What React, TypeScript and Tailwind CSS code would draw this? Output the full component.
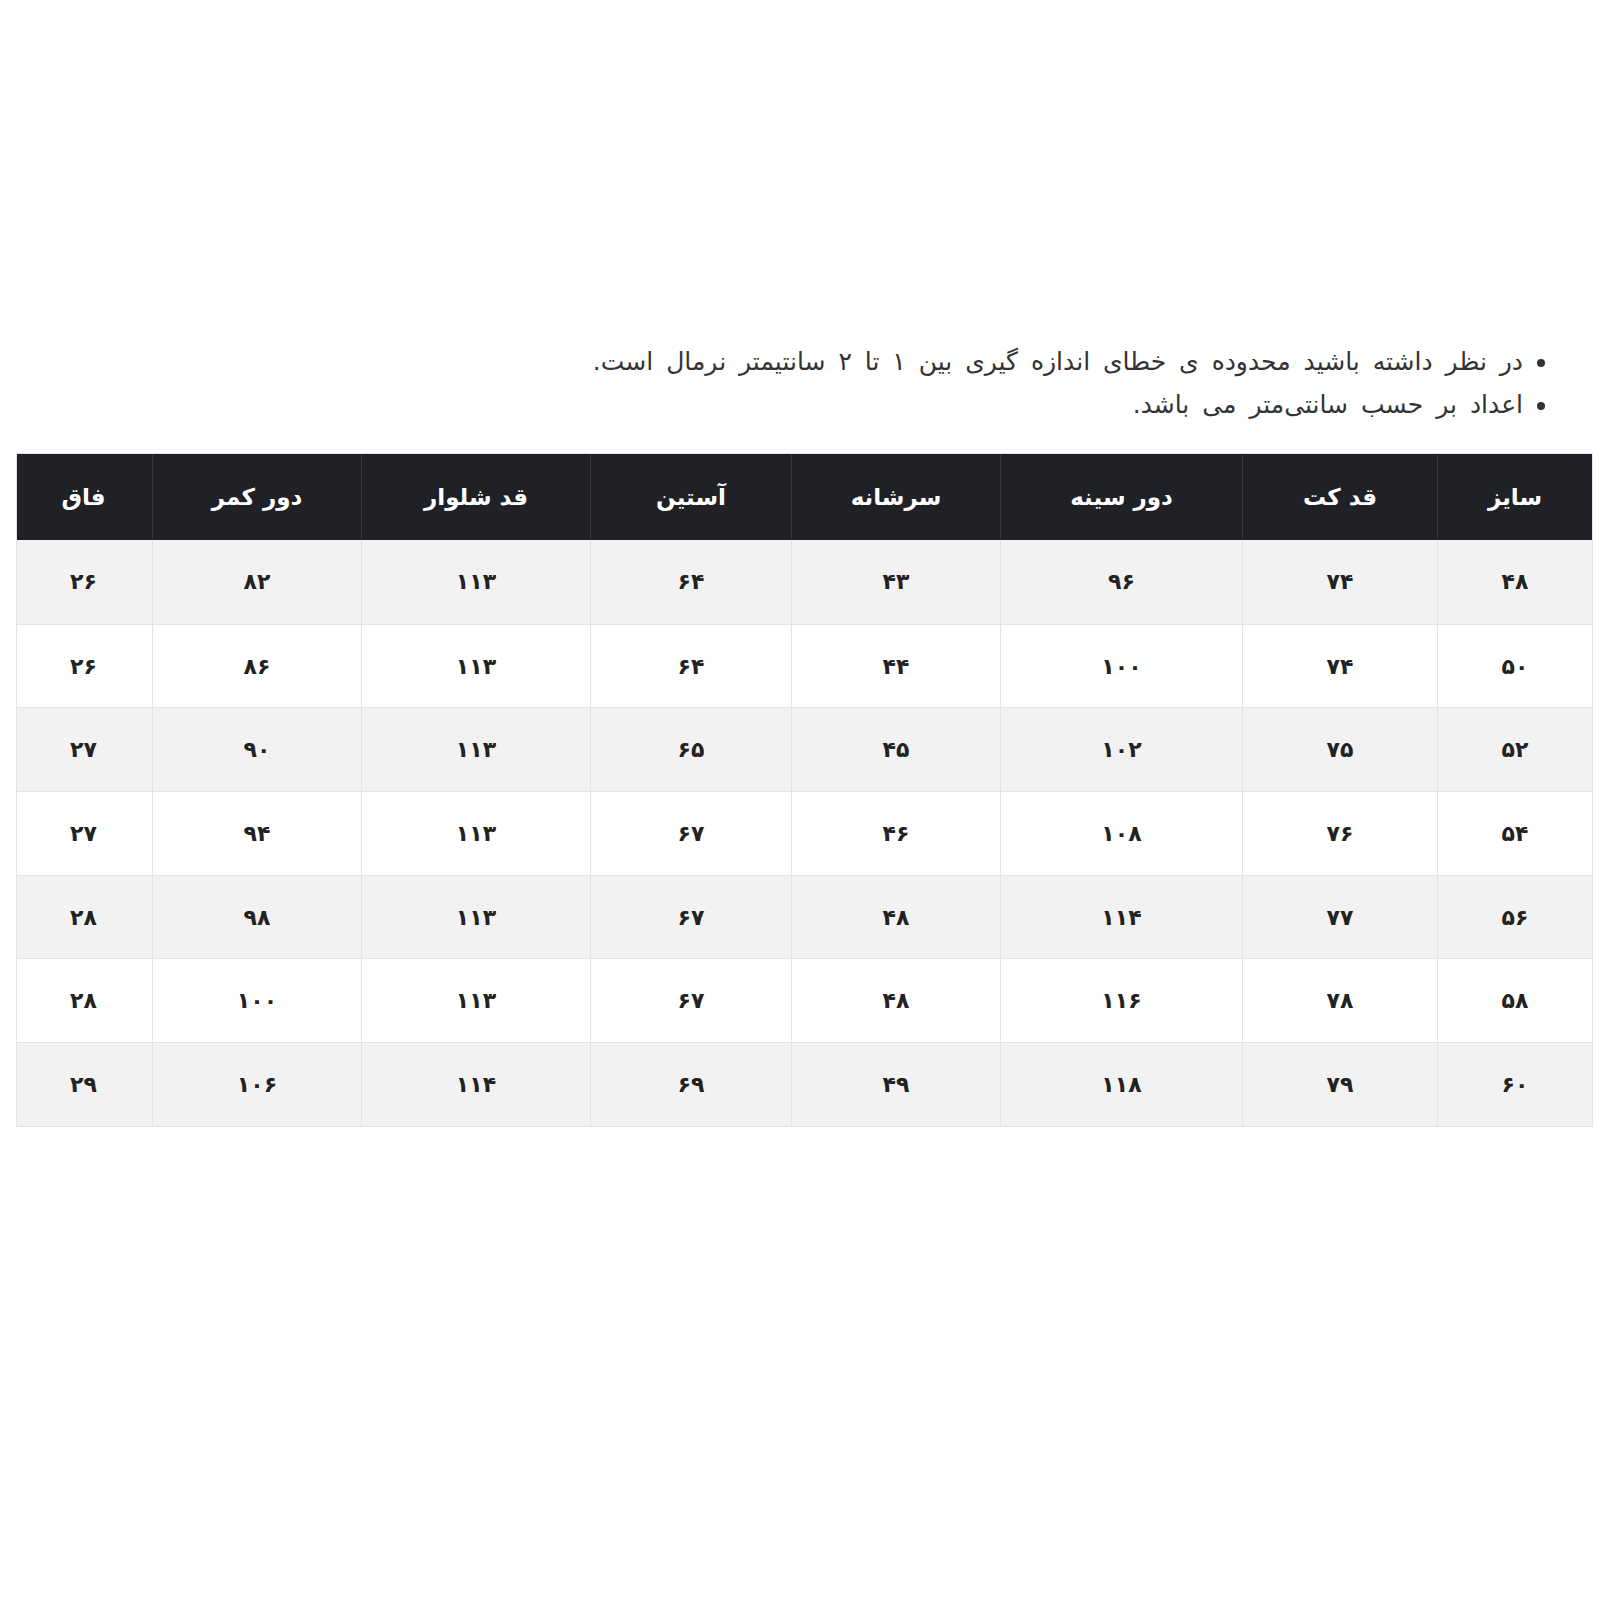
const headers = ['سایز', 'قد کت', 'دور سینه', 'سرشانه', 'آستین', 'قد شلوار', 'دور کمر', 'فاق'];

const rows = [
    ['۴۸', '۷۴', '۹۶', '۴۳', '۶۴', '۱۱۳', '۸۲', '۲۶'],
    ['۵۰', '۷۴', '۱۰۰', '۴۴', '۶۴', '۱۱۳', '۸۶', '۲۶'],
    ['۵۲', '۷۵', '۱۰۲', '۴۵', '۶۵', '۱۱۳', '۹۰', '۲۷'],
    ['۵۴', '۷۶', '۱۰۸', '۴۶', '۶۷', '۱۱۳', '۹۴', '۲۷'],
    ['۵۶', '۷۷', '۱۱۴', '۴۸', '۶۷', '۱۱۳', '۹۸', '۲۸'],
    ['۵۸', '۷۸', '۱۱۶', '۴۸', '۶۷', '۱۱۳', '۱۰۰', '۲۸'],
    ['۶۰', '۷۹', '۱۱۸', '۴۹', '۶۹', '۱۱۴', '۱۰۶', '۲۹'],
];

const gridCols = 'grid grid-cols-[155px_195px_242px_209px_201px_229px_209px_137px]';

export default function App() {
    return (
        <div dir="rtl" className="w-[1600px] h-[1600px] bg-white font-['DejaVu_Sans',sans-serif] text-[#2b2b2b]">
            {/* Notes */}
            <ul className="list-disc pt-[340px] pr-[77px] text-[25px] leading-[43px] [word-spacing:5px] text-[#333]">
                <li>در نظر داشته باشید محدوده ی خطای اندازه گیری بین ۱ تا ۲ سانتیمتر نرمال است.</li>
                <li>اعداد بر حسب سانتی‌متر می باشد.</li>
            </ul>

            {/* Size table */}
            <div className="mt-[27px] mr-[7px] ml-[16px] border border-[#e3e3e3]">
                <div className={`${gridCols} h-[86px] bg-[#202126] text-white text-[23px] font-bold`}>
                    {headers.map((h, i) => (
                        <div
                            key={h}
                            className={`flex items-center justify-center ${i < headers.length - 1 ? 'border-l border-[#35363b]' : ''}`}
                        >
                            {h}
                        </div>
                    ))}
                </div>
                {rows.map((row, r) => (
                    <div
                        key={r}
                        className={`${gridCols} h-[83.7px] ${r % 2 === 0 ? 'bg-[#f2f2f2]' : 'bg-white'} ${r > 0 ? 'border-t border-[#e3e3e3]' : ''}`}
                    >
                        {row.map((cell, i) => (
                            <div
                                key={i}
                                className={`flex items-center justify-center text-[22px] font-bold text-[#222] ${i < row.length - 1 ? 'border-l border-[#e3e3e3]' : ''}`}
                            >
                                {cell}
                            </div>
                        ))}
                    </div>
                ))}
            </div>
        </div>
    );
}
